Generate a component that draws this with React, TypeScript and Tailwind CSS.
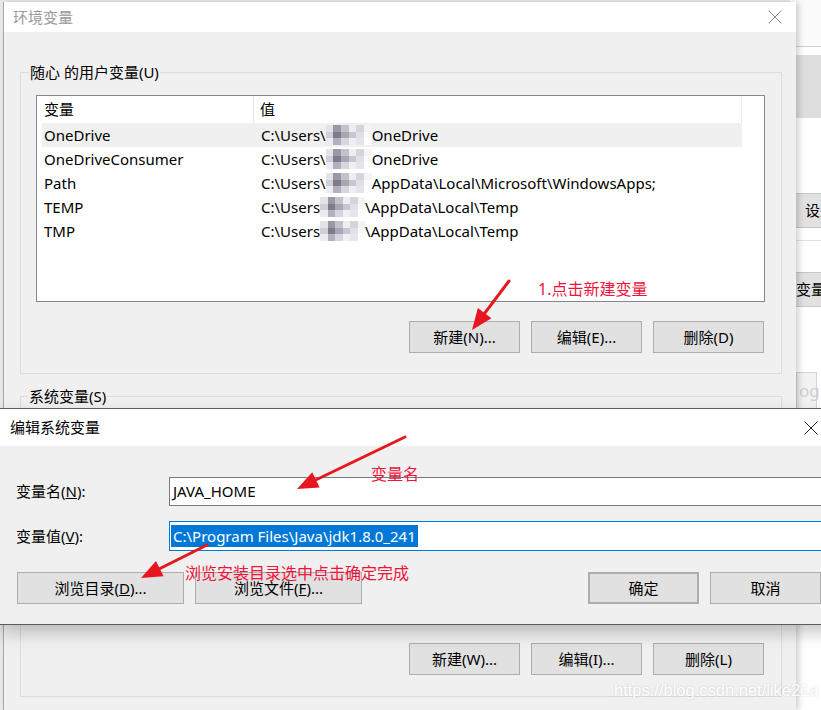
import React from "react";

const userRows = [
  { name: "OneDrive", pre: "C:\\Users\\", post: "OneDrive", w: 46 },
  { name: "OneDriveConsumer", pre: "C:\\Users\\", post: "OneDrive", w: 46 },
  { name: "Path", pre: "C:\\Users\\", post: "AppData\\Local\\Microsoft\\WindowsApps;", w: 46 },
  { name: "TEMP", pre: "C:\\Users", post: "\\AppData\\Local\\Temp", w: 45 },
  { name: "TMP", pre: "C:\\Users", post: "\\AppData\\Local\\Temp", w: 45 },
];

const mosaicColors = [
  ["#e4e4e8", "#9a98a6", "#c4c2cc", "#eeeef0", "#d6d4dc", "#f4f4f6"],
  ["#d0ced8", "#7e7c8a", "#a8a6b2", "#c8c6d0", "#e2e0e6", "#fafafa"],
  ["#ececf0", "#b2b0bc", "#d8d6de", "#f0f0f2", "#e6e6ea", "#ffffff"],
];

function Mosaic({ w }: { w: number }) {
  return (
    <span className="inline-flex h-[20px] flex-col" style={{ width: w }}>
      {mosaicColors.map((row, r) => (
        <span key={r} className="flex flex-1">
          {row.map((c, i) => (
            <span key={i} className="flex-1" style={{ background: c }} />
          ))}
        </span>
      ))}
    </span>
  );
}

function WinButton({
  children,
  className = "",
}: {
  children: React.ReactNode;
  className?: string;
}) {
  return (
    <div
      className={`flex h-[32px] w-[111px] items-center justify-center border border-[#adadad] bg-[#e1e1e1] text-[15px] text-black ${className}`}
    >
      {children}
    </div>
  );
}

function CloseX({ color }: { color: string }) {
  return (
    <svg width="14" height="14" viewBox="0 0 14 14">
      <path d="M0.5 0.5 L13.5 13.5 M13.5 0.5 L0.5 13.5" stroke={color} strokeWidth="1" />
    </svg>
  );
}

function Arrow({ x1, y1, x2, y2 }: { x1: number; y1: number; x2: number; y2: number }) {
  const dx = x2 - x1;
  const dy = y2 - y1;
  const len = Math.hypot(dx, dy);
  const ux = dx / len;
  const uy = dy / len;
  const hl = 21;
  const hw = 8.5;
  const bx = x2 - ux * hl;
  const by = y2 - uy * hl;
  const px = -uy;
  const py = ux;
  return (
    <g>
      <line x1={x1} y1={y1} x2={bx + ux * 2} y2={by + uy * 2} stroke="#e8161e" strokeWidth="3" strokeLinecap="round" />
      <polygon
        points={`${x2},${y2} ${bx + px * hw},${by + py * hw} ${bx - px * hw},${by - py * hw}`}
        fill="#e8161e"
      />
    </g>
  );
}

export default function App() {
  return (
    <div className="relative h-[710px] w-[821px] overflow-hidden bg-[#e9e9e9] font-['Noto_Sans','Noto_Sans_CJK_SC',sans-serif] text-[15px] text-black">
      {/* window behind, right side */}
      <div className="absolute left-[790px] top-0 flex h-[710px] w-[31px] flex-col bg-white pl-[6px]">
        <div className="h-[46px] bg-[#fbfbfb]" />
        <div className="h-px bg-[#cfcfcf]" />
        <div className="h-[8px]" />
        <div className="h-[63px] bg-[#dedede]" />
        <div className="h-[75px]" />
        <div className="flex h-[35px] items-center overflow-hidden border-y border-[#c8c8c8] bg-[#e1e1e1] pl-[9px] whitespace-nowrap">
          设置
        </div>
        <div className="h-[12px]" />
        <div className="h-px bg-[#e2e2e2]" />
        <div className="h-[31px]" />
        <div className="flex h-[35px] items-center overflow-hidden border-y border-[#c8c8c8] bg-[#e1e1e1] whitespace-nowrap">
          变量
        </div>
        <div className="h-[65px]" />
        <div className="mr-[4px] flex h-[38px] items-center border border-[#d4d4d4] bg-[#f2f2f2] pl-[2px] text-[17px] text-[#d0d0d0]">
          og
        </div>
      </div>

      {/* environment variables window */}
      <div className="absolute left-[3px] top-[2px] flex h-[708px] w-[793px] flex-col border-l border-[#a8a8a8] bg-[#f0f0f0] shadow-[3px_0_6px_rgba(0,0,0,0.18)]">
        <div className="flex h-[30px] items-center justify-between bg-white pl-[9px] pr-[14px]">
          <span className="text-[#9a9a9a]">环境变量</span>
          <CloseX color="#8a8a8a" />
        </div>

        <div className="flex flex-col pl-[16px]">
          {/* user variables group */}
          <div className="relative mt-[40px] flex h-[302px] w-[762px] flex-col border border-[#dcdcdc] pl-[15px] pt-[22px]">
            <span className="absolute left-[8px] top-[-11px] bg-[#f0f0f0] px-[1px] leading-[20px]">
              随心 的用户变量(U)
            </span>
            <div className="flex h-[207px] w-[729px] flex-col border border-[#828790] bg-white">
              <div className="flex h-[27px] w-[705px] items-center border-r border-[#ececec]">
                <div className="flex h-full w-[217px] items-center border-r border-[#e5e5e5] pl-[7px]">变量</div>
                <div className="pl-[6px]">值</div>
              </div>
              {userRows.map((r, i) => (
                <div
                  key={r.name}
                  className={`ml-[5px] flex h-[24px] w-[700px] items-center whitespace-nowrap ${i === 0 ? "bg-[#f0f0f0]" : ""}`}
                >
                  <div className="w-[219px] pl-[2px]">{r.name}</div>
                  <div className="flex items-center">
                    <span>{r.pre}</span>
                    <Mosaic w={r.w} />
                    <span>{r.post}</span>
                  </div>
                </div>
              ))}
            </div>
            <div className="mt-[19px] flex w-[729px] justify-end gap-[11px] pr-[1px]">
              <WinButton>新建(N)...</WinButton>
              <WinButton>编辑(E)...</WinButton>
              <WinButton>删除(D)</WinButton>
            </div>
          </div>

          {/* system variables group */}
          <div className="relative mt-[22px] flex h-[301px] w-[762px] flex-col border border-[#dcdcdc] pl-[15px] pt-[22px]">
            <span className="absolute left-[7px] top-[-11px] bg-[#f0f0f0] px-[1px] leading-[20px]">
              系统变量(S)
            </span>
            <div className="h-[206px] w-[729px] border border-[#828790] bg-white" />
            <div className="mt-[18px] flex w-[729px] justify-end gap-[11px] pr-[1px]">
              <WinButton>新建(W)...</WinButton>
              <WinButton>编辑(I)...</WinButton>
              <WinButton>删除(L)</WinButton>
            </div>
          </div>
        </div>
      </div>

      {/* edit system variable dialog */}
      <div className="absolute left-0 top-[408px] flex h-[217px] w-[840px] flex-col border-y border-[#5c5c5c] bg-[#f0f0f0] shadow-[0_8px_16px_rgba(0,0,0,0.22)]">
        <div className="flex h-[37px] items-center justify-between bg-white pl-[10px] pr-[22px]">
          <span>编辑系统变量</span>
          <CloseX color="#222" />
        </div>
        <div className="flex flex-col pt-[31px]">
          <div className="flex items-center">
            <div className="w-[169px] pl-[16px]">
              变量名(<span className="underline">N</span>):
            </div>
            <div className="flex h-[29px] flex-1 items-center border border-[#7a7a7a] bg-white pl-[3px]">
              JAVA_HOME
            </div>
          </div>
          <div className="mt-[15px] flex items-center">
            <div className="w-[169px] pl-[16px]">
              变量值(<span className="underline">V</span>):
            </div>
            <div className="flex h-[30px] flex-1 items-center border border-[#0078d7] bg-white pl-[1px]">
              <span className="bg-[#0078d7] px-[2px] leading-[22px] text-white">
                C:\Program Files\Java\jdk1.8.0_241
              </span>
            </div>
          </div>
          <div className="mt-[21px] flex items-center pl-[17px]">
            <WinButton className="w-[167px]">
              浏览目录(<span className="underline">D</span>)...
            </WinButton>
            <WinButton className="ml-[11px] w-[167px]">
              浏览文件(<span className="underline">F</span>)...
            </WinButton>
            <WinButton className="ml-[226px] border-2 border-[#0078d7]">确定</WinButton>
            <WinButton className="ml-[11px]">取消</WinButton>
          </div>
        </div>
      </div>

      {/* annotations */}
      <svg className="pointer-events-none absolute inset-0" width="821" height="710">
        <Arrow x1={509} y1={281} x2={472} y2={330} />
        <Arrow x1={405} y1={437} x2={297} y2={489} />
        <Arrow x1={207} y1={545} x2={141} y2={578} />
      </svg>
      <span className="absolute left-[538px] top-[278px] text-[16px] leading-[22px] text-[#f0143c]">
        1.点击新建变量
      </span>
      <span className="absolute left-[371px] top-[463px] text-[16px] leading-[22px] text-[#f0143c]">
        变量名
      </span>
      <span className="absolute left-[185px] top-[562px] text-[16px] leading-[22px] text-[#f0143c]">
        浏览安装目录选中点击确定完成
      </span>
      <span className="absolute left-[614px] top-[679px] font-['Liberation_Sans',sans-serif] text-[16.5px] leading-[22px] text-white [text-shadow:0_0_2px_rgba(0,0,0,0.18)]">
        https://blog.csdn.net/like21a
      </span>
    </div>
  );
}
